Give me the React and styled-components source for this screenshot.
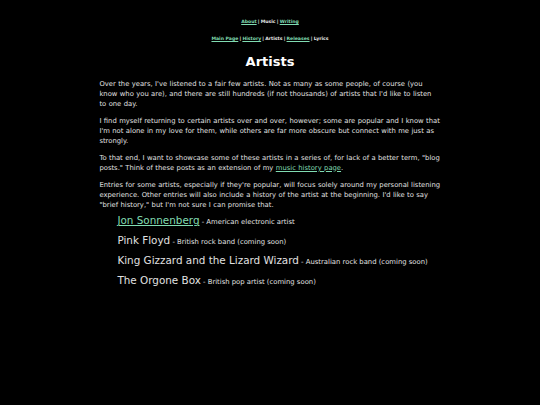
import React from "react";
import styled, { createGlobalStyle } from "styled-components";

const Global = createGlobalStyle`
  html, body { margin: 0; padding: 0; background: #000; }
  body { font-family: "DejaVu Sans", Verdana, sans-serif; color: #e0e0e0; }
`;

const Page = styled.div`
  width: 341.2px;
  margin: 0 auto;
  padding-top: 19px;
`;

const Nav = styled.nav`
  text-align: center;
  font-size: 4.6px;
  font-weight: bold;
  line-height: 6px;
  color: #e8e8e8;
  margin-bottom: ${(p) => p.$gap || 0}px;
`;

const Link = styled.a`
  color: #80dcb2;
  text-decoration: underline;
`;

const Sep = styled.span`
  margin: 0 1.2px;
`;

const Title = styled.h1`
  font-size: 13px;
  font-weight: bold;
  color: #fff;
  text-align: center;
  margin: 12px 0 9px;
  line-height: 16px;
`;

const Para = styled.p`
  font-size: 6.8px;
  word-spacing: 0.25px;
  line-height: 10px;
  margin: 0 0 6.85px;
`;

const List = styled.ul`
  list-style: none;
  margin: 0;
  padding-left: 18px;
`;

const Item = styled.li`
  font-size: 10.4px;
  line-height: 9px;
  margin-bottom: 10px;
`;

const ArtistLink = styled.a`
  color: #80dcb2;
  text-decoration: underline;
`;

const Desc = styled.span`
  font-size: 6.85px;
  line-height: 1;
`;

const navTop = [
  { label: "About", link: true },
  { label: "Music", link: false },
  { label: "Writing", link: true },
];
const navSub = [
  { label: "Main Page", link: true },
  { label: "History", link: true },
  { label: "Artists", link: false },
  { label: "Releases", link: true },
  { label: "Lyrics", link: false },
];

const NavLine = ({ items, gap }) => (
  <Nav $gap={gap}>
    {items.map((it, i) => (
      <React.Fragment key={it.label}>
        {i > 0 && <Sep>|</Sep>}
        {it.link ? <Link href="#">{it.label}</Link> : <span>{it.label}</span>}
      </React.Fragment>
    ))}
  </Nav>
);

const artists = [
  { name: "Jon Sonnenberg", desc: "American electronic artist", link: true },
  { name: "Pink Floyd", desc: "British rock band (coming soon)" },
  { name: "King Gizzard and the Lizard Wizard", desc: "Australian rock band (coming soon)" },
  { name: "The Orgone Box", desc: "British pop artist (coming soon)" },
];

export default function App() {
  return (
    <>
      <Global />
      <Page>
        <NavLine items={navTop} gap={11} />
        <NavLine items={navSub} />
        <Title>Artists</Title>
        <Para>
          Over the years, I've listened to a fair few artists. Not as many as some people, of course (you
          know who you are), and there are still hundreds (if not thousands) of artists that I'd like to
          listen to one day.
        </Para>
        <Para>
          I find myself returning to certain artists over and over, however; some are popular and I know
          that I'm not alone in my love for them, while others are far more obscure but connect with me
          just as strongly.
        </Para>
        <Para>
          To that end, I want to showcase some of these artists in a series of, for lack of a better term,
          "blog posts." Think of these posts as an extension of my <Link href="#">music history page</Link>.
        </Para>
        <Para>
          Entries for some artists, especially if they're popular, will focus solely around my personal
          listening experience. Other entries will also include a history of the artist at the beginning.
          I'd like to say "brief history," but I'm not sure I can promise that.
        </Para>
        <List>
          {artists.map((a) => (
            <Item key={a.name}>
              {a.link ? <ArtistLink href="#">{a.name}</ArtistLink> : a.name}
              <Desc> - {a.desc}</Desc>
            </Item>
          ))}
        </List>
      </Page>
    </>
  );
}
